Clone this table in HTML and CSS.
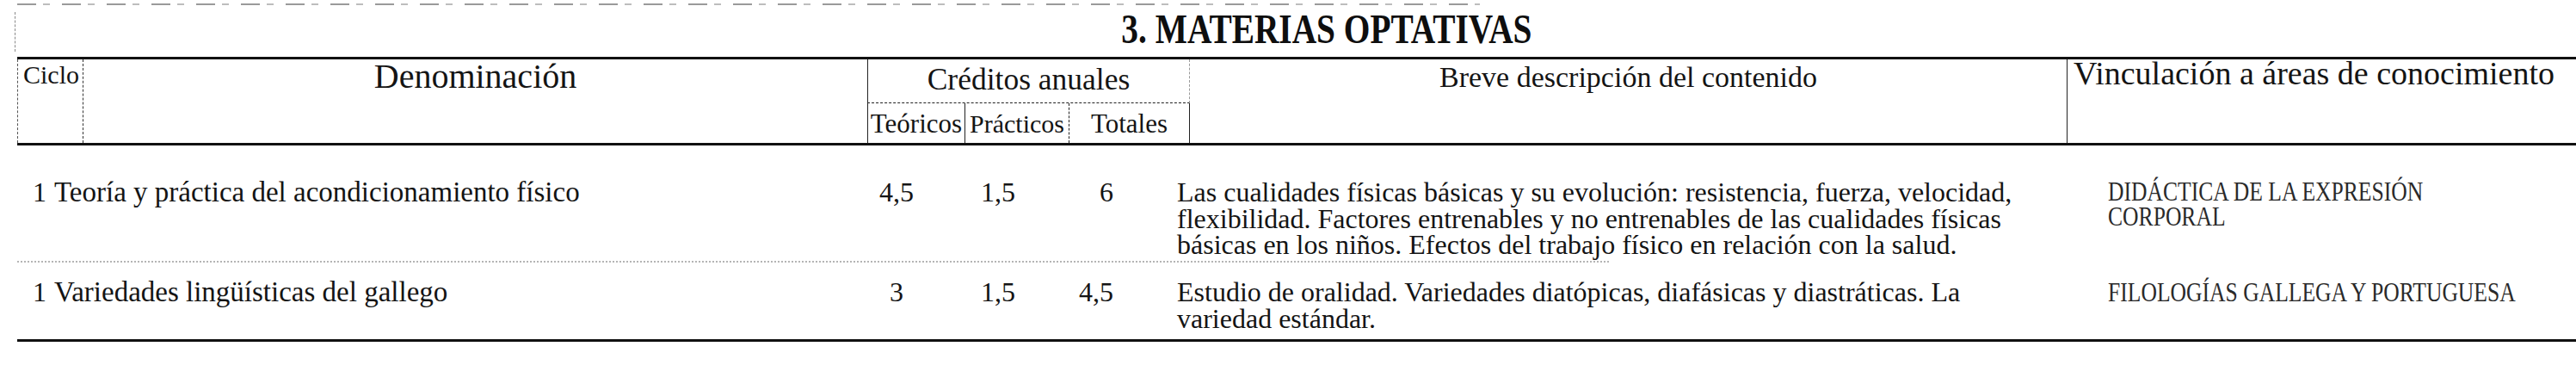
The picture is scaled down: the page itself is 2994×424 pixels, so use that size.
FILE: index.html
```html
<!DOCTYPE html>
<html lang="es">
<head>
<meta charset="utf-8">
<title>3. Materias optativas</title>
<link rel="stylesheet" href="styles.css">
</head>
<body>
<div class="page">
  <div class="scanline"></div>
  <div class="titlerow">
    <div class="mark"></div>
    <h1 class="title"><span class="title-text">3. MATERIAS OPTATIVAS</span></h1>
  </div>
  <div class="thead">
    <div class="h-ciclo">Ciclo</div>
    <div class="h-den">Denominación</div>
    <div class="h-cred">Créditos anuales</div>
    <div class="h-teo">Teóricos</div>
    <div class="h-prac">Prácticos</div>
    <div class="h-tot">Totales</div>
    <div class="h-breve">Breve descripción del contenido</div>
    <div class="h-vinc">Vinculación a áreas de conocimiento</div>
  </div>
  <div class="tbody">
    <div class="row row1">
      <div class="c-ciclo">1</div>
      <div class="c-name">Teoría y práctica del acondicionamiento físico</div>
      <div class="c-teo">4,5</div>
      <div class="c-prac">1,5</div>
      <div class="c-tot">6</div>
      <div class="c-gap"></div>
      <div class="c-desc">Las cualidades físicas básicas y su evolución: resistencia, fuerza, velocidad,<br>flexibilidad. Factores entrenables y no entrenables de las cualidades físicas<br>básicas en los niños. Efectos del trabajo físico en relación con la salud.</div>
      <div class="c-vinc"><span class="cond">DIDÁCTICA DE LA EXPRESIÓN<br>CORPORAL</span></div>
    </div>
    <div class="sep"></div>
    <div class="row row2">
      <div class="c-ciclo">1</div>
      <div class="c-name">Variedades lingüísticas del gallego</div>
      <div class="c-teo">3</div>
      <div class="c-prac">1,5</div>
      <div class="c-tot">4,5</div>
      <div class="c-gap"></div>
      <div class="c-desc">Estudio de oralidad. Variedades diatópicas, diafásicas y diastráticas. La<br>variedad estándar.</div>
      <div class="c-vinc"><span class="cond">FILOLOGÍAS GALLEGA Y PORTUGUESA</span></div>
    </div>
  </div>
</div>
</body>
</html>
```

FILE: styles.css
```css
html, body {
  margin: 0;
  padding: 0;
  background: #fff;
}
body {
  width: 2994px;
  height: 424px;
  overflow: hidden;
  font-family: "Liberation Serif", "Times New Roman", serif;
  color: #141414;
}
.page {
  width: 2994px;
  height: 424px;
}
.scanline {
  margin: 4px 0 0 20px;
  width: 1700px;
  height: 2px;
  background: repeating-linear-gradient(90deg, #9a9a9a 0 22px, transparent 22px 30px, #bdbdbd 30px 38px, transparent 38px 52px);
}
.titlerow {
  display: flex;
  align-items: flex-start;
  height: 60px;
}
.mark {
  margin: 8px 0 0 17px;
  width: 0;
  height: 46px;
  border-left: 1px dashed #8a8a8a;
}
.title {
  flex: 1;
  margin: 4px 0 0 0;
  padding-left: 72px;
  font-size: 48px;
  line-height: 48px;
  font-weight: bold;
  text-align: center;
  color: #0e0e0e;
}
.title-text {
  display: inline-block;
  transform: scaleX(0.82);
  white-space: nowrap;
}
.thead {
  margin-left: 20px;
  display: grid;
  grid-template-columns: 77px 911px 114px 121px 140px 1019px 1fr;
  grid-template-rows: 51px 46px;
  border-top: 3px solid #111;
  border-bottom: 3px solid #111;
}
.h-ciclo {
  grid-column: 1;
  grid-row: 1 / 3;
  border-left: 1px dashed #555;
  border-right: 1px dashed #333;
  padding: 3px 0 0 6px;
  font-size: 30px;
  line-height: 30px;
}
.h-den {
  grid-column: 2;
  grid-row: 1 / 3;
  font-size: 40px;
  line-height: 40px;
  text-align: center;
}
.h-cred {
  grid-column: 3 / 6;
  grid-row: 1;
  border-left: 1px solid #222;
  border-right: 1px dashed #9a9a9a;
  border-bottom: 1px dashed #222;
  padding-top: 6px;
  font-size: 35.5px;
  line-height: 35px;
  text-align: center;
  white-space: nowrap;
}
.h-teo, .h-prac, .h-tot {
  grid-row: 2;
  padding-top: 9px;
  font-size: 31px;
  line-height: 29px;
  text-align: center;
  white-space: nowrap;
}
.h-teo {
  grid-column: 3;
  border-left: 1px solid #222;
  border-right: 1px solid #222;
}
.h-prac {
  grid-column: 4;
  border-right: 1px dashed #222;
  font-size: 30px;
}
.h-tot {
  grid-column: 5;
  border-right: 1px solid #222;
}
.h-breve {
  grid-column: 6;
  grid-row: 1 / 3;
  padding-top: 4px;
  font-size: 34px;
  line-height: 34px;
  text-align: center;
}
.h-vinc {
  grid-column: 7;
  grid-row: 1 / 3;
  border-left: 1px solid #222;
  padding-left: 7px;
  font-size: 38px;
  line-height: 32px;
  white-space: nowrap;
}
.tbody {
  margin-left: 20px;
  border-bottom: 3px solid #111;
}
.row {
  display: grid;
  grid-template-columns: 10px 33px 945px 68px 168px 50px 74px 1082px 1fr;
  font-size: 32px;
  line-height: 30.5px;
}
.row1 {
  padding: 39px 0 3.5px;
}
.row2 {
  padding: 19px 0 9px;
}
.c-ciclo {
  grid-column: 2;
  padding-left: 8px;
}
.c-name {
  grid-column: 3;
  font-size: 33px;
  white-space: nowrap;
}
.c-teo {
  grid-column: 4;
  text-align: center;
}
.c-prac {
  grid-column: 5;
  text-align: center;
}
.c-tot {
  grid-column: 6;
  text-align: right;
}
.c-desc {
  grid-column: 8;
  white-space: nowrap;
}
.c-vinc {
  grid-column: 9;
  white-space: nowrap;
}
.cond {
  display: inline-block;
  font-size: 32px;
  line-height: 29px;
  transform: scaleX(0.8);
  transform-origin: left top;
  color: #2a2a2a;
}
.sep {
  width: 1850px;
  height: 0;
  border-top: 2px dotted #b5b5b5;
}
```
